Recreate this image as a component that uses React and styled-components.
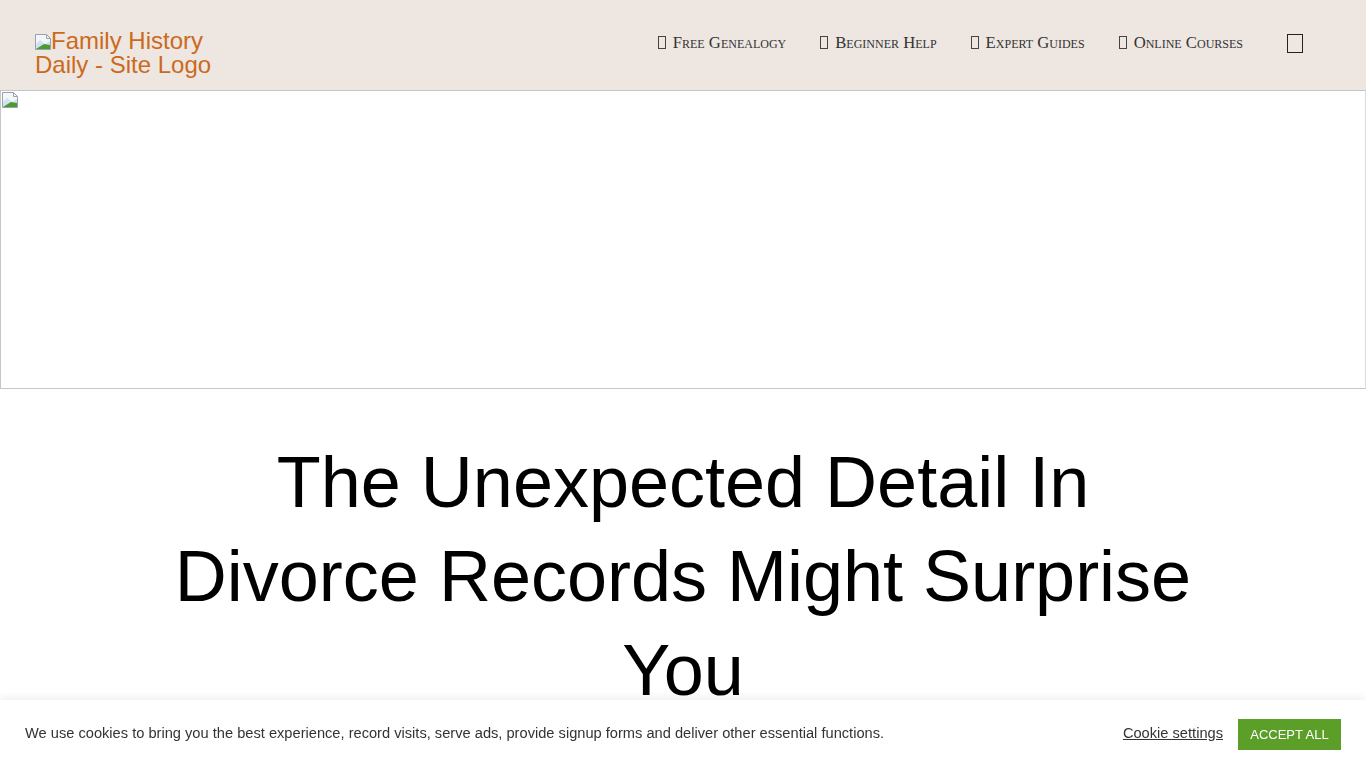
import React from 'react';
import styled, { createGlobalStyle } from 'styled-components';

const GlobalStyle = createGlobalStyle`
  html, body {
    margin: 0;
    padding: 0;
    background: #fff;
    font-family: "Liberation Sans", Arial, sans-serif;
  }
`;

const BrokenImage = () => (
  <svg width="16" height="16" viewBox="0 0 16 16">
    <path d="M0.5 0.5h11l4 4v11h-15z" fill="#f4f6f9" stroke="#9aa3ad" />
    <path d="M11.5 0.5v4h4" fill="none" stroke="#9aa3ad" />
    <path d="M1 10l4-4 5 4 5-3v8H1z" fill="#cfe3f5" />
    <path d="M1 15l8-5 6 1v4z" fill="#4e9a2f" />
  </svg>
);

const navItems = ['Free Genealogy', 'Beginner Help', 'Expert Guides', 'Online Courses'];

const App = () => {
  return (
    <>
      <GlobalStyle />
      <Header>
        <Logo href="#">
          <BrokenImage />
          Family History Daily - Site Logo
        </Logo>
        <Nav>
          {navItems.map((item) => (
            <NavLink key={item} href="#">
              <Tofu />
              {item}
            </NavLink>
          ))}
          <MenuTofu />
        </Nav>
      </Header>
      <Hero>
        <BrokenImage />
      </Hero>
      <TitleWrap>
        <Title>The Unexpected Detail In Divorce Records Might Surprise You</Title>
      </TitleWrap>
      <CookieBar>
        <CookieText>
          We use cookies to bring you the best experience, record visits, serve ads, provide signup forms and deliver other essential functions.
        </CookieText>
        <CookieActions>
          <SettingsLink href="#">Cookie settings</SettingsLink>
          <AcceptButton>ACCEPT ALL</AcceptButton>
        </CookieActions>
      </CookieBar>
    </>
  );
};

export default App;

const Header = styled.header`
  height: 90px;
  background: #ede6e1;
  display: flex;
  align-items: center;
  justify-content: space-between;
  padding: 0 63px 0 35px;
  box-sizing: border-box;
`;

const Logo = styled.a`
  display: block;
  width: 190px;
  color: #cc6a1c;
  font-size: 24px;
  line-height: 24px;
  text-decoration: none;
  font-family: "Liberation Sans", Arial, sans-serif;
  margin-top: 15px;

  svg {
    vertical-align: -1px;
  }
`;

const Nav = styled.nav`
  display: flex;
  align-items: center;
  gap: 34px;
  margin-top: -4px;
`;

const NavLink = styled.a`
  display: flex;
  align-items: center;
  gap: 7px;
  color: #333;
  font-family: "Liberation Serif", "Times New Roman", serif;
  font-variant: small-caps;
  font-size: 16.7px;
  text-decoration: none;
`;

const Tofu = styled.span`
  display: inline-block;
  width: 6px;
  height: 11px;
  border: 1px solid #444;
  margin-top: -2px;
`;

const MenuTofu = styled.span`
  display: inline-block;
  width: 14px;
  height: 17px;
  border: 1px solid #222;
  margin-left: 10px;
`;

const Hero = styled.div`
  height: 299px;
  border: 1px solid #c6c6c6;
  border-right-color: #dcdcdc;
  box-sizing: border-box;
  padding: 1px 0 0 1px;
`;

const TitleWrap = styled.div`
  display: flex;
  justify-content: center;
  padding: 46px 20px 0;
`;

const Title = styled.h1`
  margin: 0;
  max-width: 1030px;
  text-align: center;
  font-family: "Liberation Sans", Arial, sans-serif;
  font-weight: 400;
  font-size: 72px;
  line-height: 94px;
  color: #000;
`;

const CookieBar = styled.div`
  position: fixed;
  left: 0;
  right: 0;
  bottom: 0;
  height: 68px;
  background: #fff;
  box-shadow: 0 -3px 8px rgba(0, 0, 0, 0.06);
  display: flex;
  align-items: center;
  justify-content: space-between;
  padding: 0 25px;
  box-sizing: border-box;
`;

const CookieText = styled.p`
  margin: 0 0 2px;
  font-size: 14.65px;
  color: #333;
`;

const CookieActions = styled.div`
  display: flex;
  align-items: center;
  gap: 15px;
`;

const SettingsLink = styled.a`
  color: #333;
  font-size: 14.65px;
  text-decoration: underline;
  margin-bottom: 2px;
`;

const AcceptButton = styled.button`
  background: #5b9f29;
  color: #fff;
  border: none;
  font-family: "Liberation Sans", Arial, sans-serif;
  font-size: 13px;
  padding: 0 12px;
  height: 31px;
  width: 103px;
  cursor: pointer;
`;
